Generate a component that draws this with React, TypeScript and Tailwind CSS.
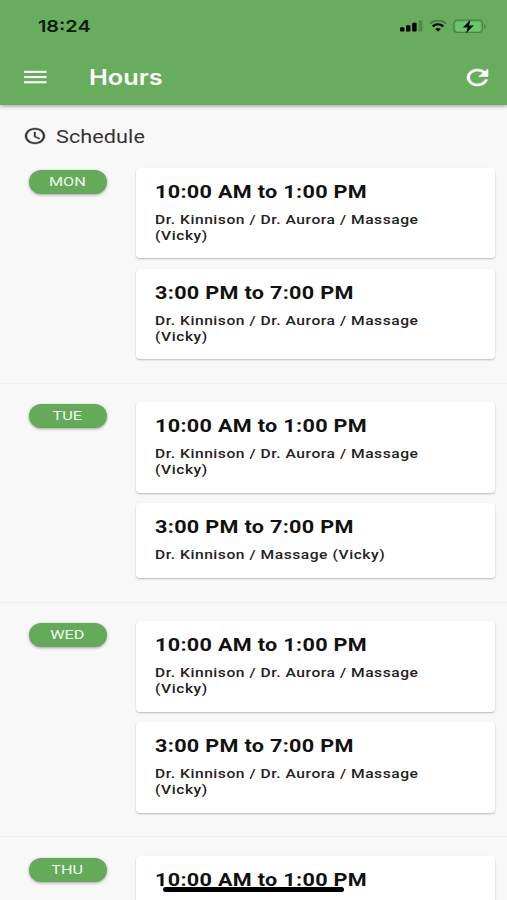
interface Slot {
  time: string;
  staff?: string;
}

interface Day {
  label: string;
  slots: Slot[];
}

const FULL_STAFF = "Dr. Kinnison / Dr. Aurora / Massage (Vicky)";

const MORNING: Slot = { time: "10:00 AM to 1:00 PM", staff: FULL_STAFF };
const AFTERNOON: Slot = { time: "3:00 PM to 7:00 PM", staff: FULL_STAFF };

const DAYS: Day[] = [
  { label: "MON", slots: [MORNING, AFTERNOON] },
  {
    label: "TUE",
    slots: [MORNING, { time: "3:00 PM to 7:00 PM", staff: "Dr. Kinnison / Massage (Vicky)" }],
  },
  { label: "WED", slots: [MORNING, AFTERNOON] },
  { label: "THU", slots: [{ time: "10:00 AM to 1:00 PM" }] },
];

function StatusIcons() {
  return (
    <div className="flex items-center">
      {/* Signal */}
      <svg className="w-[23px] h-3" viewBox="0 0 23 12">
        <rect x="0" y="7.2" width="4.4" height="4.4" rx="1" />
        <rect x="6" y="5.2" width="4.4" height="6.4" rx="1" />
        <rect x="12.2" y="2.7" width="4.4" height="8.9" rx="1" />
        <rect x="18.3" y="0.3" width="4.2" height="11.3" rx="1" opacity="0.2" />
      </svg>
      {/* Wifi */}
      <svg className="w-[18px] h-3 ml-[6px]" viewBox="0 0 18 12" fill="none" stroke="black">
        <path d="M0.8 3.6C5.5-0.5 12.5-0.5 17.2 3.6" strokeWidth="1.7" opacity="0.3" />
        <path d="M3.7 6.4C6.8 3.7 11.2 3.7 14.3 6.4" strokeWidth="2.3" />
        <path d="M6.2 8.9Q9 7 11.8 8.9L9 11.6Z" fill="black" stroke="none" />
      </svg>
      {/* Battery, charging */}
      <svg className="w-[34px] h-[15px] ml-[6px]" viewBox="0 0 34 15">
        <rect x="0.8" y="1.2" width="28.6" height="12.3" rx="3.5" fill="none" stroke="#468441" strokeWidth="1.2" />
        <rect x="2.6" y="2.8" width="25" height="9.1" rx="2" fill="#67c86b" />
        <path d="M31 5.2Q33 6 33 7.4Q33 8.8 31 9.6Z" fill="#468441" />
        <path d="M17.5 0.7L9.8 8.5H14.6L13 14.2L20.8 6.4H16Z" fill="black" />
      </svg>
    </div>
  );
}

function SlotCard({ slot }: { slot: Slot }) {
  return (
    <div className="min-h-[75px] bg-white rounded-[4px] shadow-[0_1px_2px_rgba(0,0,0,0.25)] pl-[19px] pt-[13px] pb-[14.5px]">
      <div className="w-[270px] origin-left scale-x-[1.2]">
        <p className="text-[18px] leading-[22px] font-bold tracking-[0.27px] text-[#111] whitespace-nowrap">{slot.time}</p>
        {slot.staff && (
          <p className="mt-[9px] w-[234px] text-[13px] leading-4 font-medium tracking-[0.45px] text-[#222]">
            {slot.staff}
          </p>
        )}
      </div>
    </div>
  );
}

export default function App() {
  return (
    <div className="relative w-[507px] h-[900px] overflow-hidden bg-[#f8f8f8] font-['Roboto',sans-serif]">
      <header className="relative h-[105px] bg-[#68ad5d] shadow-[0_1px_4px_rgba(0,0,0,0.4)]">
        <div className="h-[52px] flex items-center justify-between pl-[38px] pr-[20px]">
          <span className="origin-left scale-x-[1.2] text-[16.5px] font-semibold text-[#0c1a0b] font-['Inter',sans-serif]">
            18:24
          </span>
          <StatusIcons />
        </div>
        <div className="h-[50px] flex items-center pl-6 pr-[19px] text-white">
          <svg className="w-[23px] h-[14px]" viewBox="0 0 23 14" fill="currentColor">
            <rect y="0.8" width="22.5" height="2.1" />
            <rect y="6" width="22.5" height="2.1" />
            <rect y="11.2" width="22.5" height="2.1" />
          </svg>
          <h1 className="ml-[42px] origin-left scale-x-[1.15] text-[22px] font-semibold font-['Inter',sans-serif]">
            Hours
          </h1>
          <svg
            className="ml-auto w-[21px] h-[17px] overflow-visible"
            viewBox="4 4 16 16"
            preserveAspectRatio="none"
            fill="currentColor"
            stroke="currentColor"
            strokeWidth="0.5"
          >
            <path d="M17.65 6.35A7.96 7.96 0 0 0 12 4a8 8 0 1 0 7.73 10h-2.08A6 6 0 1 1 12 6c1.66 0 3.14.69 4.22 1.78L13 11h7V4l-2.35 2.35z" />
          </svg>
        </div>
      </header>

      <div className="flex items-center h-[62.5px] pl-[25px] text-[#333]">
        <svg
          className="w-5 h-4 overflow-visible"
          viewBox="2 2 20 20"
          preserveAspectRatio="none"
          fill="currentColor"
          stroke="currentColor"
          strokeWidth="0.4"
        >
          <path d="M11.99 2C6.47 2 2 6.48 2 12s4.47 10 9.99 10C17.52 22 22 17.52 22 12S17.52 2 11.99 2zM12 20c-4.42 0-8-3.58-8-8s3.58-8 8-8 8 3.58 8 8-3.58 8-8 8zm.5-13H11v6l5.25 3.15.75-1.23-4.5-2.67z" />
        </svg>
        <h2 className="mt-[3px] ml-[11px] origin-left scale-x-[1.17] text-[18.5px] tracking-[0.05px]">Schedule</h2>
      </div>

      {DAYS.map((day, i) => (
        <section
          key={day.label}
          className={`flex pl-[29px] pr-3 pb-[23.5px] border-b border-[#eeeeee] ${i > 0 ? "pt-[18.5px]" : ""}`}
        >
          <div className="mt-[2px] w-[78px] h-6 shrink-0 rounded-full bg-[#64ab59] shadow-[0_1px_3px_rgba(0,0,0,0.35)] flex items-center justify-center">
            <span className="-mt-px mr-px scale-x-[1.2] text-[13.5px] text-[#f1f8f0]">{day.label}</span>
          </div>
          <div className="ml-[29px] flex-1 flex flex-col gap-[10.5px]">
            {day.slots.map((slot) => (
              <SlotCard key={slot.time} slot={slot} />
            ))}
          </div>
        </section>
      ))}

      {/* Home indicator */}
      <div className="absolute left-[163px] top-[887px] w-[181px] h-[5px] rounded-full bg-black" />
    </div>
  );
}
